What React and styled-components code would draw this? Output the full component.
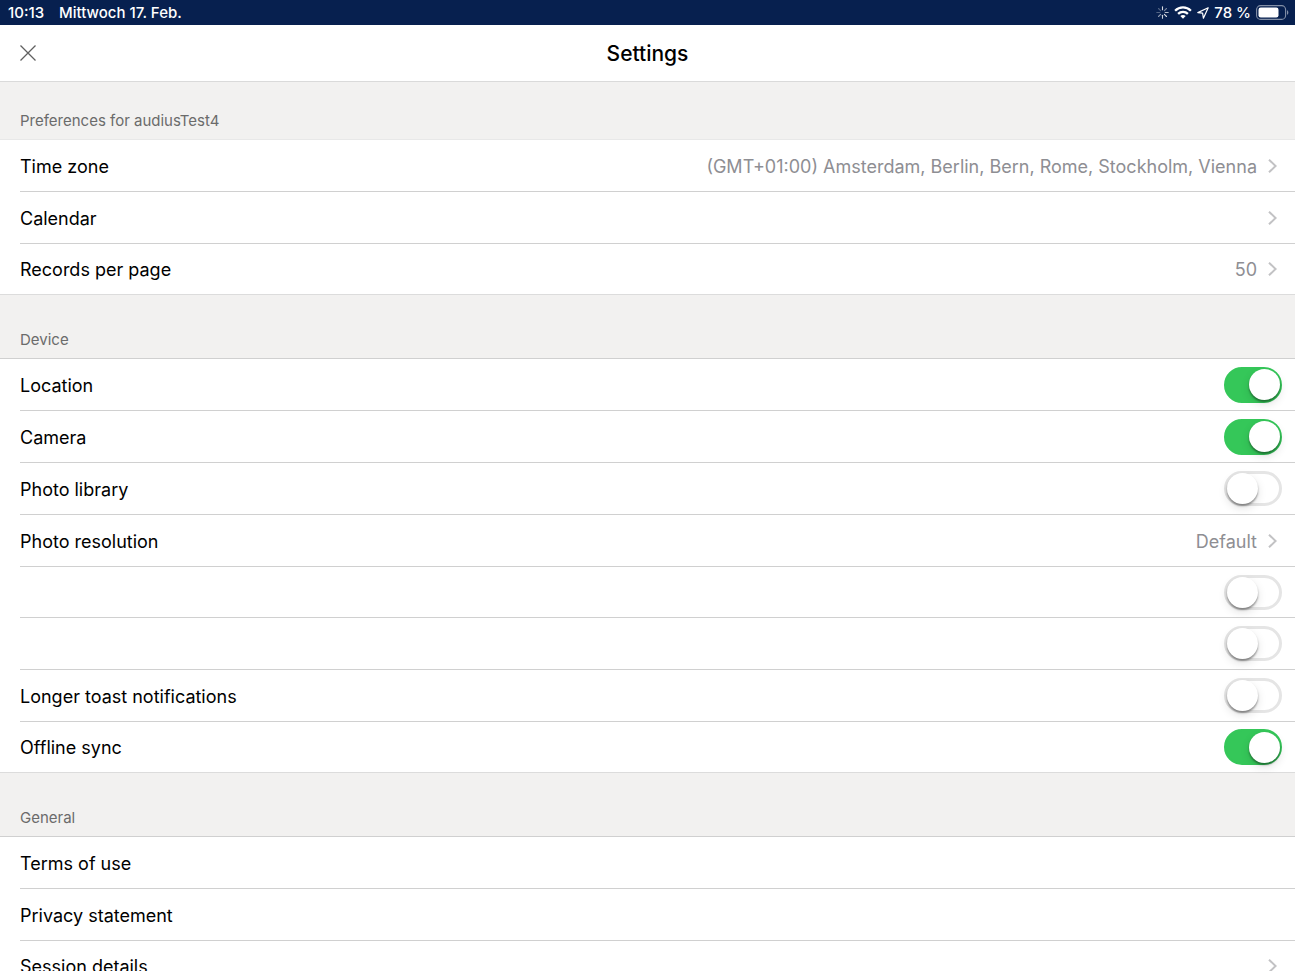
import React, { useState } from 'react';
import styled, { createGlobalStyle, css } from 'styled-components';

const GlobalStyle = createGlobalStyle`
    * {
        box-sizing: border-box;
    }

    body {
        margin : 0;
        background : #fff;
        color : #000;
        font-family : Inter, "Liberation Sans", sans-serif;
    }
`

const Page = styled.div`
    display : flex;
    flex-direction : column;
    height : 100vh;
    overflow : hidden;
`

const StatusBar = styled.div`
    display : flex;
    flex-shrink : 0;
    justify-content : space-between;
    align-items : center;
    height : 25px;
    padding : 0 6px 0 8px;
    background : #07204f;
    color : #fff;
    font-size : 15px;
    font-weight : 500;
    line-height : 24px;
`

const StatusGroup = styled.div`
    display : flex;
    align-items : center;
    gap : ${props => props.$gap}px;
`

const Header = styled.header`
    display : grid;
    flex-shrink : 0;
    grid-template-columns : 1fr auto 1fr;
    align-items : center;
    height : 57px;
    padding : 0 12px;
    border-bottom : 1px solid #dadada;
`

const Title = styled.h1`
    margin : 0;
    padding-top : 2px;
    font-size : 21px;
    font-weight : 500;
    line-height : 28px;
`

const CloseButton = styled.button`
    display : flex;
    justify-self : start;
    align-items : center;
    justify-content : center;
    width : 32px;
    height : 32px;
    padding : 0;
    border : 0;
    background : none;
    color : #606060;
    cursor : pointer;
`

const Main = styled.main`
    flex : 1;
    min-height : 0;
    overflow : hidden;
`

const SectionTitle = styled.h2`
    margin : 0;
    padding : ${props => props.$first ? '29px' : '35px'} 20px 8px;
    border-bottom : 1px solid ${props => props.$first ? '#e8e8e8' : '#d0d0d0'};
    background : #f2f1f0;
    color : #6b6b6b;
    font-size : 15px;
    font-weight : 400;
    line-height : 20px;
`

const List = styled.ul`
    margin : 0;
    padding : 0;
    border-bottom : 1px solid #dcdcdc;
    list-style : none;
`

const Item = styled.li`
    margin-left : 20px;
    border-bottom : 1px solid #d0d0d0;

    &:last-child {
        border-bottom : 0;
    }
`

const rowStyle = css`
    display : flex;
    align-items : center;
    width : 100%;
    height : ${props => props.$short ? 50 : 51}px;
    color : inherit;
    font-family : inherit;
    font-size : 18px;
    line-height : 24px;
    text-align : left;
`

const LinkRow = styled.button`
    ${rowStyle}
    padding : 0 18px 0 0;
    border : 0;
    background : none;
    cursor : pointer;
`

const SwitchRow = styled.label`
    ${rowStyle}
    padding-right : 13px;
    cursor : pointer;
`

const Label = styled.span`
    flex : 1;
    padding-top : 2px;
`

const Value = styled.span`
    margin-right : 11px;
    padding-top : 2px;
    color : #8e8e93;
`

const Switch = styled.input`
    display : flex;
    align-items : center;
    width : 58px;
    height : 35px;
    margin : 0;
    border : 3px solid #e5e5e5;
    border-radius : 18px;
    appearance : none;
    background : #fff;
    cursor : pointer;

    &::before {
        content : '';
        flex-shrink : 0;
        width : 31px;
        height : 31px;
        border-radius : 50%;
        background : #fff;
        box-shadow : 0 2px 2px rgba(0, 0, 0, 0.38), 0 4px 10px rgba(0, 0, 0, 0.12);
    }

    &:checked {
        justify-content : flex-end;
        height : 36px;
        border-width : 2px;
        border-color : #35c759;
        background : #35c759;
    }
`

const sections = [
    {
        title: 'Preferences for audiusTest4',
        rows: [
            { label: 'Time zone', type: 'link', value: '(GMT+01:00) Amsterdam, Berlin, Bern, Rome, Stockholm, Vienna' },
            { label: 'Calendar', type: 'link' },
            { label: 'Records per page', type: 'link', value: '50', short: true },
        ],
    },
    {
        title: 'Device',
        rows: [
            { label: 'Location', type: 'switch', on: true },
            { label: 'Camera', type: 'switch', on: true },
            { label: 'Photo library', type: 'switch' },
            { label: 'Photo resolution', type: 'link', value: 'Default' },
            { label: '', type: 'switch', short: true },
            { label: '', type: 'switch' },
            { label: 'Longer toast notifications', type: 'switch' },
            { label: 'Offline sync', type: 'switch', on: true, short: true },
        ],
    },
    {
        title: 'General',
        rows: [
            { label: 'Terms of use', type: 'plain' },
            { label: 'Privacy statement', type: 'plain' },
            { label: 'Session details', type: 'link', short: true },
        ],
    },
]

const Chevron = () => (
    <svg width="9" height="14" viewBox="0 0 9 14" fill="none" stroke="#c2c2c4" strokeWidth="2" aria-hidden="true">
        <path d="M1 0.7L7.6 7L1 13.3" />
    </svg>
)

const Spinner = () => (
    <svg width="13" height="13" viewBox="0 0 13 13" stroke="#fff" strokeWidth="1.1" strokeLinecap="round" aria-hidden="true">
        <path d="M6.5 0.8V3.8" opacity="0.85" />
        <path d="M10.5 2.5L8.4 4.6" opacity="0.45" />
        <path d="M12.2 6.5H9.2" opacity="0.7" />
        <path d="M10.5 10.5L8.4 8.4" opacity="0.85" />
        <path d="M6.5 12.2V9.2" opacity="0.8" />
        <path d="M2.5 10.5L4.6 8.4" opacity="0.55" />
        <path d="M0.8 6.5H3.8" opacity="0.3" />
        <path d="M2.5 2.5L4.6 4.6" opacity="0.3" />
    </svg>
)

const Wifi = () => (
    <svg width="18" height="13" viewBox="0 0 18 13" fill="none" stroke="#fff" strokeWidth="2.3" aria-hidden="true">
        <path d="M1.1 4.7C5.5 0.3 12.5 0.3 16.9 4.7" />
        <path d="M4.1 7.9C6.8 5.2 11.2 5.2 13.9 7.9" />
        <path d="M9 12.8L6.3 10.1C7.9 8.6 10.1 8.6 11.7 10.1Z" fill="#fff" stroke="none" />
    </svg>
)

const LocationArrow = () => (
    <svg width="12" height="12" viewBox="0 0 12 12" fill="none" stroke="#fff" strokeWidth="1.2" strokeLinejoin="round" aria-hidden="true">
        <path d="M11.2 0.8L0.8 5.6L5.6 6.2L6.4 11.2Z" />
    </svg>
)

const Battery = () => (
    <svg width="33" height="15" viewBox="0 0 33 15" aria-hidden="true">
        <rect x="0.6" y="0.6" width="29" height="13.8" rx="4" fill="none" stroke="#fff" strokeOpacity="0.5" strokeWidth="1.1" />
        <rect x="2.5" y="2.5" width="20" height="10" rx="2.2" fill="#fff" />
        <path d="M31 5.2C32.8 5.8 32.8 9.2 31 9.8Z" fill="#fff" fillOpacity="0.5" />
    </svg>
)

const Row = ({ row }) => {
    const [checked, setChecked] = useState(!!row.on)

    if(row.type === 'switch'){
        return (
            <SwitchRow $short={row.short}>
                <Label>{row.label}</Label>
                <Switch type="checkbox" role="switch" checked={checked} onChange={e => setChecked(e.target.checked)} />
            </SwitchRow>
        )
    }
    return (
        <LinkRow type="button" $short={row.short}>
            <Label>{row.label}</Label>
            {row.value && <Value>{row.value}</Value>}
            {row.type === 'link' && <Chevron />}
        </LinkRow>
    )
}

const App = () => {
    return (
        <Page>
            <GlobalStyle />
            <StatusBar>
                <StatusGroup $gap={15}>
                    <span>10:13</span>
                    <span>Mittwoch 17. Feb.</span>
                </StatusGroup>
                <StatusGroup $gap={5}>
                    <Spinner />
                    <Wifi />
                    <LocationArrow />
                    <span>78 %</span>
                    <Battery />
                </StatusGroup>
            </StatusBar>
            <Header>
                <CloseButton type="button" aria-label="Close">
                    <svg width="16" height="16" viewBox="0 0 16 16" stroke="currentColor" strokeWidth="1.3">
                        <path d="M0.5 0.5L15.5 15.5M15.5 0.5L0.5 15.5" />
                    </svg>
                </CloseButton>
                <Title>Settings</Title>
            </Header>
            <Main>
                {sections.map((section, i) => (
                    <section key={section.title}>
                        <SectionTitle $first={i === 0}>{section.title}</SectionTitle>
                        <List>
                            {section.rows.map((row, j) => (
                                <Item key={j}>
                                    <Row row={row} />
                                </Item>
                            ))}
                        </List>
                    </section>
                ))}
            </Main>
        </Page>
    );
};

export default App;
